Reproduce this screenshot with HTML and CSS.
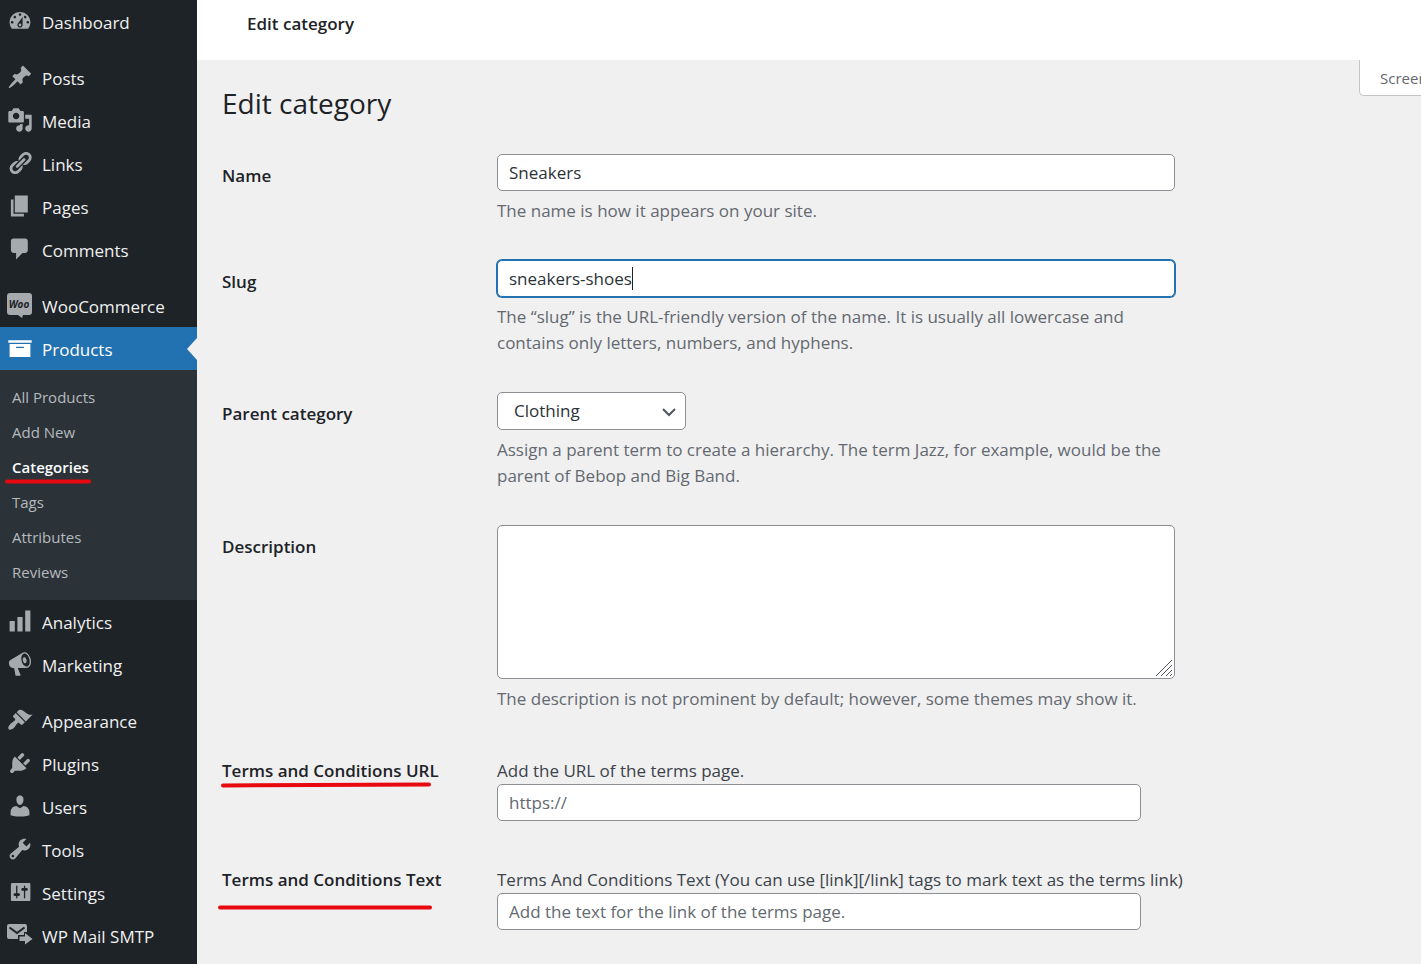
FILE: index.html
```html
<!DOCTYPE html>
<html lang="en">
<head>
<meta charset="utf-8">
<title>Edit category</title>
<link rel="stylesheet" href="styles.css">
</head>
<body>
<div class="layout">
<nav class="sidebar" aria-label="Main menu">
  <ul class="menu">
    <li><a class="menu-item" href="#"><svg class="icon" viewBox="0 0 20 20"><path d="M3.76 16h12.48c1.1-1.37 1.76-3.11 1.76-5 0-4.42-3.58-8-8-8s-8 3.58-8 8c0 1.89.66 3.63 1.76 5zM10 4c.55 0 1 .45 1 1s-.45 1-1 1-1-.45-1-1 .45-1 1-1zM6 6c.55 0 1 .45 1 1s-.45 1-1 1-1-.45-1-1 .45-1 1-1zm8 0c.55 0 1 .45 1 1s-.45 1-1 1-1-.45-1-1 .45-1 1-1zm-5.37 5.55L12 7v6c0 1.1-.9 2-2 2s-2-.9-2-2c0-.57.24-1.08.63-1.45zM4 10c.55 0 1 .45 1 1s-.45 1-1 1-1-.45-1-1 .45-1 1-1zm12 0c.55 0 1 .45 1 1s-.45 1-1 1-1-.45-1-1 .45-1 1-1zm-5 3c0-.55-.45-1-1-1s-1 .45-1 1 .45 1 1 1 1-.45 1-1z"/></svg>Dashboard</a></li>
    <li class="group-start"><a class="menu-item" href="#"><svg class="icon" viewBox="0 0 20 20"><path d="M10.44 3.02l1.82-1.82 6.36 6.35-1.83 1.82c-1.05-.68-2.48-.57-3.41.36l-.75.75c-.92.93-1.04 2.35-.35 3.41l-1.83 1.82-2.41-2.41-2.8 2.79c-.42.42-3.38 2.71-3.8 2.29s1.86-3.39 2.28-3.81l2.79-2.79L4.1 9.36l1.83-1.82c1.05.69 2.48.57 3.4-.36l.75-.75c.93-.92 1.05-2.35.36-3.41z"/></svg>Posts</a></li>
    <li><a class="menu-item" href="#"><svg class="icon" viewBox="0 0 20 20"><path d="M13 11V4c0-.55-.45-1-1-1h-1.67L9 1H5L3.67 3H2c-.55 0-1 .45-1 1v7c0 .55.45 1 1 1h10c.55 0 1-.45 1-1zM7 4.500c1.380 0 2.500 1.120 2.500 2.500S8.380 9.500 7 9.500 4.500 8.380 4.500 7 5.620 4.500 7 4.500zM14 6h5v10.500c0 1.380-1.120 2.500-2.500 2.500S14 17.880 14 16.500s1.120-2.500 2.500-2.500c.17 0 .34.02.5.05V9h-3V6zm-4 8.050V13h2v3.500c0 1.380-1.120 2.500-2.500 2.500S7 17.880 7 16.500 8.120 14 9.500 14c.17 0 .34.02.5.05z"/></svg>Media</a></li>
    <li><a class="menu-item" href="#"><svg class="icon" viewBox="0 0 20 20"><path d="M17.74 2.76c1.68 1.69 1.68 4.41 0 6.1l-1.53 1.52c-1.12 1.12-2.7 1.47-4.14 1.09l2.62-2.61.76-.77.76-.76c.84-.84.84-2.2 0-3.04-.84-.85-2.2-.85-3.04 0l-.77.76-3.38 3.38c-.37-1.44-.02-3.02 1.1-4.14l1.52-1.53c1.69-1.68 4.42-1.68 6.1 0zM8.59 13.43l5.34-5.34c.42-.42.42-1.1 0-1.52-.44-.43-1.13-.39-1.53 0l-5.33 5.34c-.42.42-.42 1.1 0 1.52.44.43 1.13.39 1.52 0zm-.76 2.29l4.14-4.15c.38 1.44.03 3.02-1.09 4.14l-1.52 1.53c-1.69 1.68-4.41 1.68-6.1 0-1.68-1.68-1.68-4.42 0-6.1l1.53-1.52c1.12-1.12 2.7-1.47 4.14-1.1l-4.14 4.15c-.85.84-.85 2.2 0 3.05.84.84 2.2.84 3.04 0z"/></svg>Links</a></li>
    <li><a class="menu-item" href="#"><svg class="icon" viewBox="0 0 20 20"><path d="M6 15V2h10v13H6zm-1 1h8v2H3V5h2v11z"/></svg>Pages</a></li>
    <li><a class="menu-item" href="#"><svg class="icon" viewBox="0 0 20 20"><path d="M5 2h9c1.1 0 2 .9 2 2v7c0 1.1-.9 2-2 2h-2l-5 5v-5H5c-1.1 0-2-.9-2-2V4c0-1.1.9-2 2-2z"/></svg>Comments</a></li>
    <li class="group-start"><a class="menu-item" href="#"><svg class="icon" viewBox="0 0 26 26"><path d="M3 1h19a3 3 0 0 1 3 3v16a3 3 0 0 1-3 3h-6l-1 3-4-3H3a3 3 0 0 1-3-3V4a3 3 0 0 1 3-3z"/><text class="woo" x="12" y="16" text-anchor="middle">Woo</text></svg>WooCommerce</a></li>
    <li>
      <a class="menu-item current" href="#"><svg class="icon" viewBox="0 0 20 20"><path d="M19 4v2H1V4h18zM2 7h16v10H2V7zm11 3V9H7v1h6z"/></svg>Products</a>
      <ul class="submenu">
        <li><a href="#">All Products</a></li>
        <li><a href="#">Add New</a></li>
        <li><a class="active" href="#">Categories<svg class="mark mark-menu" viewBox="0 0 86 5"><path d="M2 2.5H84"/></svg></a></li>
        <li><a href="#">Tags</a></li>
        <li><a href="#">Attributes</a></li>
        <li><a href="#">Reviews</a></li>
      </ul>
    </li>
    <li><a class="menu-item" href="#"><svg class="icon" viewBox="0 0 20 20"><path d="M18 18V2h-4v16h4zm-6 0V7H8v11h4zm-6 0v-8H2v8h4z"/></svg>Analytics</a></li>
    <li><a class="menu-item" href="#"><svg class="icon" viewBox="0 0 20 20"><path d="M18.15 5.94c.46 1.62.38 3.22-.02 4.48-.42 1.28-1.26 2.18-2.3 2.48-.16.06-.26.06-.4.06-.06.02-.12.02-.18.02-.06.02-.14.02-.22.02h-6.8l2.22 5.5c.02.14-.06.26-.14.34-.08.1-.24.16-.34.16H6.95c-.1 0-.26-.06-.34-.16-.08-.08-.16-.2-.14-.34l-1-5.5H4.25l-.02-.02c-.5.06-1.08-.18-1.54-.62s-.88-1.08-1.06-1.88c-.24-.8-.2-1.56-.02-2.2.18-.62.58-1.08 1.06-1.3l.02-.02 9-5.4c.1-.06.18-.1.24-.16.06-.04.14-.08.24-.12.16-.08.28-.12.5-.18 1.04-.3 2.24.1 3.22.98s1.84 2.24 2.26 3.86zm-2.58 5.98h-.02c.4-.1.74-.34 1.04-.7.58-.7.86-1.76.86-3.04 0-.64-.1-1.3-.28-1.98-.34-1.36-1.02-2.5-1.78-3.24s-1.68-1.1-2.46-.88c-.82.22-1.4.96-1.7 2-.32 1.04-.28 2.36.06 3.72.38 1.36 1 2.5 1.8 3.24.78.74 1.62 1.1 2.48.88zm-2.54-7.08c.22-.04.42-.02.62.04.38.16.76.48 1.02 1s.42 1.2.42 1.78c0 .3-.04.56-.12.8-.18.48-.44.84-.86.94-.34.1-.8-.06-1.14-.4s-.64-.86-.78-1.5c-.18-.62-.12-1.24.02-1.72s.48-.84.82-.94z"/></svg>Marketing</a></li>
    <li class="group-start"><a class="menu-item" href="#"><svg class="icon" viewBox="0 0 20 20"><path d="M14.48 11.06L7.41 3.99l1.5-1.5c.5-.56 2.3-.47 3.51.32 1.21.8 1.43 1.28 2.91 2.1 1.18.64 2.45 1.26 4.45.85zm-.71.71L6.7 4.7 4.93 6.47c-.39.39-.39 1.02 0 1.41l1.06 1.06c.39.39.39 1.03 0 1.42-.6.6-1.43 1.11-2.21 1.69-.35.26-.7.53-1.01.84C1.43 14.23.4 16.08 1.4 17.07c.99 1 2.84-.03 4.18-1.36.31-.31.58-.66.85-1.02.57-.78 1.08-1.61 1.69-2.21.39-.39 1.02-.39 1.41 0l1.06 1.06c.39.39 1.02.39 1.41 0z"/></svg>Appearance</a></li>
    <li><a class="menu-item" href="#"><svg class="icon" viewBox="0 0 20 20"><path d="M13.11 4.36L9.87 7.6 8 5.73l3.24-3.24c.35-.34 1.05-.2 1.56.32.52.51.66 1.21.31 1.55zm-8 1.77l.91-1.12 9.01 9.01-1.19.84c-.71.71-2.63 1.16-3.82 1.16H6.14L4.9 17.26c-.59.59-1.54.59-2.12 0-.59-.58-.59-1.53 0-2.12l1.24-1.24v-3.88c0-1.13.4-3.19 1.09-3.89zm7.26 3.97l3.24-3.24c.34-.35 1.04-.21 1.55.31.52.51.66 1.21.31 1.55l-3.24 3.25z"/></svg>Plugins</a></li>
    <li><a class="menu-item" href="#"><svg class="icon" viewBox="0 0 20 20"><path d="M10 9.25c-2.27 0-2.73-3.44-2.73-3.44C7 4.02 7.82 2 9.97 2c2.16 0 2.98 2.02 2.71 3.81 0 0-.41 3.44-2.68 3.44zm0 2.57L12.72 10c2.39 0 4.52 2.33 4.52 4.53v2.49s-3.65 1.13-7.24 1.13c-3.65 0-7.24-1.13-7.24-1.13v-2.49c0-2.25 1.94-4.48 4.47-4.48z"/></svg>Users</a></li>
    <li><a class="menu-item" href="#"><svg class="icon" viewBox="0 0 20 20"><path d="M16.68 9.77c-1.34 1.34-3.3 1.67-4.95.99l-5.41 6.52c-.99.99-2.59.99-3.58 0s-.99-2.59 0-3.57l6.52-5.42c-.68-1.65-.35-3.61.99-4.95 1.28-1.28 3.12-1.62 4.72-1.06l-2.89 2.89 2.82 2.82 2.86-2.87c.53 1.58.18 3.39-1.08 4.65zM3.81 16.21c.4.39 1.04.39 1.43 0 .4-.4.4-1.04 0-1.43-.39-.4-1.03-.4-1.43 0-.39.39-.39 1.03 0 1.43z"/></svg>Tools</a></li>
    <li><a class="menu-item" href="#"><svg class="icon" viewBox="0 0 20 20"><path d="M18 16V4c0-.55-.45-1-1-1H4c-.55 0-1 .45-1 1v12c0 .55.45 1 1 1h13c.55 0 1-.45 1-1zM8 11h1c.55 0 1 .45 1 1s-.45 1-1 1H8v1.5c0 .28-.22.5-.5.5s-.5-.22-.5-.5V13H6c-.55 0-1-.45-1-1s.45-1 1-1h1V5.5c0-.28.22-.5.5-.5s.5.22.5.5V11zm5-2h-1c-.55 0-1-.45-1-1s.45-1 1-1h1V5.5c0-.28.22-.5.5-.5s.5.22.5.5V7h1c.55 0 1 .45 1 1s-.45 1-1 1h-1v5.5c0 .28-.22.5-.5.5s-.5-.22-.5-.5V9z"/></svg>Settings</a></li>
    <li><a class="menu-item" href="#"><svg class="icon" viewBox="0 0 26 26"><path d="M2 2h16a2 2 0 0 1 2 2v6h-3v3h-6v4H2a2 2 0 0 1-2-2V4a2 2 0 0 1 2-2z"/><path class="cut" d="M2.500 5.500l7.500 5.500 7.500-5.500"/><path d="M12.500 14.500H18V11l7.500 6-7.500 5.500V19h-5.500z"/></svg>WP Mail SMTP</a></li>
  </ul>
</nav>
<main class="main">
  <header class="topbar">Edit category</header>
  <div class="content">
    <button class="screen-tab" type="button">Screen Options</button>
    <h1 class="title">Edit category</h1>
    <form class="form">
      <div class="row">
        <label class="label" for="name">Name</label>
        <div class="field">
          <input class="control" id="name" type="text" value="Sneakers">
          <p class="hint">The name is how it appears on your site.</p>
        </div>
      </div>
      <div class="row">
        <label class="label" for="slug">Slug</label>
        <div class="field">
          <input class="control focused" id="slug" type="text" value="sneakers-shoes">
          <span class="caret"></span>
          <p class="hint">The “slug” is the URL-friendly version of the name. It is usually all lowercase and contains only letters, numbers, and hyphens.</p>
        </div>
      </div>
      <div class="row">
        <label class="label" for="parent">Parent category</label>
        <div class="field">
          <div class="select-wrap">
            <select class="control select" id="parent"><option>Clothing</option></select>
            <svg class="chevron" viewBox="0 0 14 10"><path d="M1 2l6 6 6-6"/></svg>
          </div>
          <p class="hint">Assign a parent term to create a hierarchy. The term Jazz, for example, would be the parent of Bebop and Big Band.</p>
        </div>
      </div>
      <div class="row">
        <label class="label" for="description">Description</label>
        <div class="field">
          <div class="area-wrap">
            <textarea class="control area" id="description"></textarea>
            <svg class="grip" viewBox="0 0 18 18"><path d="M1 17L17 1M6 17L17 6M11 17l6-6M15 17l2-2"/></svg>
          </div>
          <p class="hint">The description is not prominent by default; however, some themes may show it.</p>
        </div>
      </div>
      <div class="row row-extra">
        <label class="label" for="terms-url">Terms and Conditions URL<svg class="mark mark-url" viewBox="0 0 210 6"><path d="M2 3.500L208 2.500"/></svg></label>
        <div class="field">
          <p class="lead">Add the URL of the terms page.</p>
          <input class="control narrow" id="terms-url" type="text" placeholder="https://">
        </div>
      </div>
      <div class="row row-extra">
        <label class="label" for="terms-text">Terms and Conditions Text<svg class="mark mark-text" viewBox="0 0 214 5"><path d="M2 2.500H212"/></svg></label>
        <div class="field">
          <p class="lead">Terms And Conditions Text (You can use [link][/link] tags to mark text as the terms link)</p>
          <input class="control narrow" id="terms-text" type="text" placeholder="Add the text for the link of the terms page.">
        </div>
      </div>
    </form>
  </div>
</main>
</div>
</body>
</html>
```
FILE: styles.css
```css
* { box-sizing: border-box; }
body {
  margin: 0;
  background: #f0f0f1;
  color: #3c434a;
  font: 17px/26px "Open Sans", "Noto Sans", sans-serif;
}
ul { list-style: none; margin: 0; padding: 0; }
a { text-decoration: none; }
p { margin: 0; }

.layout { display: flex; min-height: 100vh; }

/* Sidebar */
.sidebar { flex: 0 0 197px; background: #1d2327; }
.group-start { margin-top: 13px; }
.menu-item {
  position: relative;
  display: flex;
  align-items: center;
  gap: 9px;
  height: 43px;
  padding: 2px 0 0 7px;
  color: #f0f0f1;
  white-space: nowrap;
}
.icon { flex: none; width: 26px; height: 26px; margin-top: -4px; fill: #a7aaad; }
.woo { font: italic bold 10px "Open Sans", sans-serif; fill: #1d2327; }
.cut { fill: none; stroke: #1d2327; stroke-width: 2; }
.current { background: #2271b1; color: #fff; }
.current .icon { fill: #fff; }
.current::after {
  content: "";
  position: absolute;
  right: 0;
  top: 11px;
  border: 11px solid transparent;
  border-left: 0;
  border-right: 10px solid #f0f0f1;
}
.submenu { padding: 10px 0; background: #2c3338; font-size: 15px; }
.submenu a {
  position: relative;
  display: block;
  padding: 0 12px;
  color: #b4b9be;
  line-height: 35px;
}
.submenu .active { color: #fff; font-weight: 600; }

/* Hand-drawn highlights */
.mark {
  position: absolute;
  fill: none;
  stroke: #e80910;
  stroke-width: 4;
  stroke-linecap: round;
}
.mark-menu { left: 5px; top: 29px; width: 86px; height: 5px; }
.mark-url { left: -1px; top: 33px; width: 210px; height: 6px; }
.mark-text { left: -4px; top: 47px; width: 214px; height: 5px; }

/* Main area */
.main { flex: 1; min-width: 0; }
.topbar {
  height: 60px;
  padding: 11px 50px;
  background: #fff;
  color: #1d2327;
  font-weight: 600;
}
.content { position: relative; padding: 23px 25px; }
.screen-tab {
  position: absolute;
  right: 0;
  top: 0;
  width: 62px;
  height: 36px;
  padding: 0 0 0 20px;
  overflow: hidden;
  border: 1px solid #c3c4c7;
  border-width: 0 0 1px 1px;
  border-radius: 0 0 0 5px;
  background: #fff;
  color: #646970;
  font: 15px/36px "Open Sans", "Noto Sans", sans-serif;
  text-align: left;
  white-space: nowrap;
}
.title {
  margin: 0 0 31px;
  color: #1d2327;
  font-size: 28px;
  font-weight: 400;
  line-height: 40px;
}
.form { display: flex; flex-direction: column; gap: 36px; }
.row { display: grid; grid-template-columns: 275px minmax(0, 678px); }
.row-extra { padding-top: 10px; }
.label {
  position: relative;
  padding-top: 9px;
  color: #1d2327;
  font-weight: 600;
}
.row-extra .label { margin-top: -9px; }
.field { position: relative; }
.control {
  display: block;
  width: 100%;
  height: 37px;
  padding: 0 11px;
  border: 1px solid #8c8f94;
  border-radius: 5px;
  background: #fff;
  color: #2c3338;
  font: inherit;
}
.control::placeholder { color: #646970; opacity: 1; }
.narrow { width: 95%; }
.focused { border-color: #2271b1; box-shadow: 0 0 0 1px #2271b1; }
.caret { position: absolute; left: 135px; top: 7px; width: 1px; height: 23px; background: #1d2327; }
.select-wrap { position: relative; width: 189px; }
.select { height: 38px; padding: 0 16px; appearance: none; }
.chevron {
  position: absolute;
  right: 10px;
  top: 15px;
  width: 14px;
  height: 10px;
  fill: none;
  stroke: #50575e;
  stroke-width: 2;
}
.area-wrap { position: relative; margin-bottom: 7px; }
.area { height: 154px; resize: none; }
.grip {
  position: absolute;
  right: 2px;
  bottom: 2px;
  width: 18px;
  height: 18px;
  fill: none;
  stroke: #50575e;
  stroke-width: 1;
}
.hint { margin-top: 7px; color: #646970; }
.lead { white-space: nowrap; }
```
